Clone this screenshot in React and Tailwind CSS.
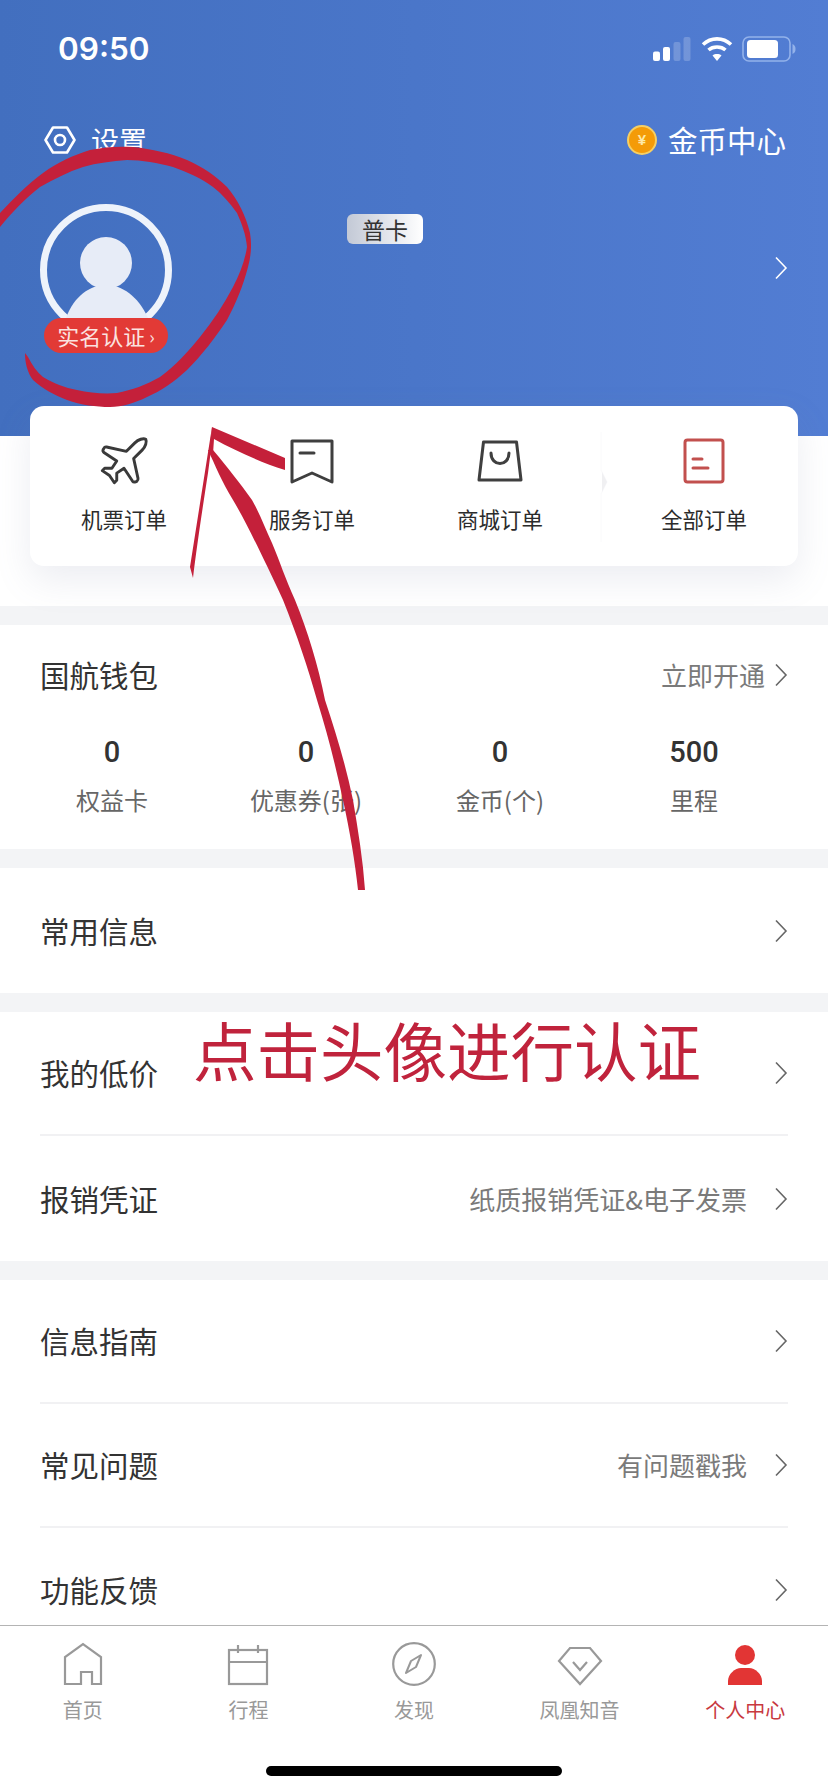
import React from "react";
import { Plane } from "lucide-react";

const cjk = "font-['Noto_Sans_CJK_SC','Noto_Sans',sans-serif]";

const Chevron = ({ className = "stroke-[#666]" }) => (
  <svg width="14" height="24" viewBox="0 0 14 24" fill="none" className={className}>
    <polyline points="2,1.5 12,12 2,22.5" strokeWidth="1.6" />
  </svg>
);

const StatusBar = () => (
  <div className="flex h-[98px] items-center justify-between pl-[58px] pr-[32px]">
    <span className="font-['Inter',sans-serif] text-[31.5px] font-semibold text-white">09:50</span>
    <div className="flex items-center">
      <svg width="38" height="24" viewBox="0 0 38 24" fill="white">
        <rect x="0" y="14.5" width="7" height="9.5" rx="2" />
        <rect x="10" y="10" width="7" height="14" rx="2" />
        <rect x="20.5" y="5" width="7" height="19" rx="2" opacity="0.2" />
        <rect x="30.5" y="0" width="7" height="24" rx="2" opacity="0.2" />
      </svg>
      <svg width="32" height="26" viewBox="0 0 32 26" fill="none" stroke="white" strokeWidth="3.6" className="ml-[10px]">
        <path d="M2 8.5 C10 1 22 1 30 8.5" />
        <path d="M7.5 14 C12 10 20 10 24.5 14" />
        <path d="M16 25 L11.5 19.5 C14 17.6 18 17.6 20.5 19.5 Z" fill="white" stroke="none" />
      </svg>
      <svg width="54" height="26" viewBox="0 0 54 26" fill="none" className="ml-[9px]">
        <rect x="1" y="1" width="47" height="24" rx="6" stroke="#93b2ea" strokeWidth="1.6" />
        <rect x="5" y="4" width="31" height="18" rx="3.5" fill="white" />
        <path d="M50.5 8 C53 9 53.5 11 53.5 13 C53.5 15 53 17 50.5 18 Z" fill="#93b2ea" />
      </svg>
    </div>
  </div>
);

const Header = () => (
  <div className="h-[436px] bg-linear-to-r from-[#426fbf] to-[#527dd3]">
    <StatusBar />
    <div className="flex h-[84px] items-center justify-between pl-[44px] pr-[42px]">
      <div className="flex items-center">
        <svg width="32" height="28" viewBox="0 0 32 28" fill="none" stroke="white" strokeWidth="2.6">
          <path d="M9 1.5 H23 L30.5 14 L23 26.5 H9 L1.5 14 Z" strokeLinejoin="round" />
          <circle cx="16" cy="14" r="5" />
        </svg>
        <span className={`${cjk} ml-[15px] text-[28px] leading-none text-white`}>设置</span>
      </div>
      <div className="flex items-center">
        <div className="flex h-[30px] w-[30px] items-center justify-center rounded-full border-2 border-[#f6cf63] bg-[#f49b07] font-['Liberation_Sans',sans-serif] text-[15px] font-bold text-[#fde9a8]">
          ¥
        </div>
        <span className={`${cjk} ml-[11px] text-[29.5px] leading-none text-white`}>金币中心</span>
      </div>
    </div>
    <div className="flex h-[182px] items-start justify-between pl-[40px] pr-[40px] pt-[22px]">
      <div className="relative h-[132px] w-[132px]">
        <svg width="132" height="132" viewBox="0 0 132 132" fill="none">
          <circle cx="66" cy="66" r="62.5" stroke="#eef3fb" strokeWidth="7" />
          <circle cx="66" cy="59" r="26" fill="#e7ecf7" />
          <path d="M26 114 C34 92 50 81 66 81 C82 81 98 92 108 114 Z" fill="#e7ecf7" />
        </svg>
        <div className={`${cjk} absolute left-[4px] top-[114px] flex h-[35px] w-[124px] items-center justify-center rounded-full bg-[#e23a36] text-[22px] text-[#fbe3e0]`}>
          实名认证<span className="ml-[4px] text-[18px] leading-none">›</span>
        </div>
      </div>
      <div className={`${cjk} ml-[175px] mt-[10px] flex h-[30px] w-[76px] items-center justify-center rounded-md bg-linear-to-r from-[#c3c9d6] to-white text-[23px] leading-none text-[#333]`}>
        普卡
      </div>
      <div className="ml-auto mt-[52px]">
        <Chevron className="stroke-white" />
      </div>
    </div>
  </div>
);

const orderItems = [
  { label: "机票订单", icon: <Plane size={58} strokeWidth={1.2} color="#3a3a3a" /> },
  {
    label: "服务订单",
    icon: (
      <svg width="46" height="46" viewBox="0 0 46 46" fill="none" stroke="#3f3f3f" strokeWidth="3" strokeLinejoin="round">
        <path d="M3 3 H43 V44 L23 35 L3 44 Z" />
        <path d="M11 15 H25" strokeLinecap="round" />
      </svg>
    ),
  },
  {
    label: "商城订单",
    icon: (
      <svg width="46" height="42" viewBox="0 0 46 42" fill="none" stroke="#3f3f3f" strokeWidth="3" strokeLinejoin="round" strokeLinecap="round">
        <path d="M6.5 2 H39.5 L44 40 H2 Z" />
        <path d="M14 13 C14 27 32 27 32 13" />
      </svg>
    ),
  },
  {
    label: "全部订单",
    icon: (
      <svg width="42" height="46" viewBox="0 0 42 46" fill="none" stroke="#c2504e" strokeWidth="3" strokeLinejoin="round" strokeLinecap="round">
        <rect x="2" y="2" width="38" height="42" rx="2.5" />
        <path d="M10 21 H19" />
        <path d="M10 30 H25" />
      </svg>
    ),
  },
];

const OrderCard = () => (
  <div className="relative z-10 mx-[30px] -mt-[30px] flex h-[160px] rounded-[14px] bg-white shadow-[0_14px_36px_rgba(120,130,160,0.14)]">
    {orderItems.map((item, i) => (
      <div
        key={item.label}
        className={`relative flex flex-col items-center ${i === 3 ? "flex-1 pl-[16px]" : "w-[188px]"}`}
      >
        <div className="flex h-[64px] mt-[23px] items-center justify-center">{item.icon}</div>
        <span className={`${cjk} mt-[15px] text-[21.5px] leading-none text-[#2b2b2b]`}>{item.label}</span>
        {i === 3 && (
          <svg width="10" height="110" viewBox="0 0 10 110" fill="none" className="absolute left-[6px] top-[26px]">
            <path d="M1 0 V38 L7 50 L1 62 V110" stroke="#fafafb" strokeWidth="1" />
            <path d="M2 40 L7 50 L2 60 Z" fill="#f0f0f2" />
          </svg>
        )}
      </div>
    ))}
  </div>
);

const Row = ({ title, sub, divider, height = "h-[124px]" }) => (
  <div className={`ml-[40px] mr-[40px] flex ${height} items-center justify-between ${divider ? "border-b-2 border-[#f1f1f3]" : ""}`}>
    <span className={`${cjk} text-[29.5px] leading-none text-[#333]`}>{title}</span>
    <div className="flex items-center">
      {sub && <span className={`${cjk} mr-[27px] text-[26px] leading-none text-[#7a7a7a]`}>{sub}</span>}
      <Chevron />
    </div>
  </div>
);

const stats = [
  { value: "0", label: "权益卡" },
  { value: "0", label: "优惠券(张)" },
  { value: "0", label: "金币(个)" },
  { value: "500", label: "里程" },
];

const Wallet = () => (
  <section className="h-[224px] bg-white">
    <div className="ml-[40px] mr-[40px] flex h-[100px] items-center justify-between">
      <span className={`${cjk} text-[29.5px] leading-none text-[#333]`}>国航钱包</span>
      <div className="flex items-center">
        <span className={`${cjk} mr-[9px] text-[26px] leading-none text-[#7a7a7a]`}>立即开通</span>
        <Chevron />
      </div>
    </div>
    <div className="grid grid-cols-4 pl-[15px] pr-[37px]">
      {stats.map((s) => (
        <div key={s.label} className="flex flex-col items-center">
          <span className="mt-[11px] font-['Roboto',sans-serif] text-[29px] font-medium leading-[32px] text-[#333]">{s.value}</span>
          <span className={`${cjk} mt-[20px] text-[24px] leading-none text-[#666]`}>{s.label}</span>
        </div>
      ))}
    </div>
  </section>
);

const Band = () => <div className="h-[19px] bg-[#f3f4f6]" />;

const tabs = [
  {
    label: "首页",
    icon: (
      <svg width="40" height="44" viewBox="0 0 40 44" fill="none" stroke="#999" strokeWidth="2.2">
        <path d="M2 42 V15 L20 2 L38 15 V42 H29 V30 H18 V42 Z" />
      </svg>
    ),
  },
  {
    label: "行程",
    icon: (
      <svg width="42" height="42" viewBox="0 0 42 42" fill="none" stroke="#999" strokeWidth="2.2">
        <rect x="2" y="6" width="38" height="34" />
        <path d="M2 18 H40 M11 1 V9 M31 1 V9" />
      </svg>
    ),
  },
  {
    label: "发现",
    icon: (
      <svg width="44" height="44" viewBox="0 0 44 44" fill="none" stroke="#999" strokeWidth="2.2" strokeLinejoin="round">
        <circle cx="22" cy="22" r="20.8" />
        <path d="M14 31 L19 19 L29 13 L24 25 Z" strokeWidth="2" />
      </svg>
    ),
  },
  {
    label: "凤凰知音",
    icon: (
      <svg width="46" height="40" viewBox="0 0 46 40" fill="none" stroke="#999" strokeWidth="2.2">
        <path d="M13 2 H33 L44 15 L23 38 L2 15 Z" />
        <path d="M16 16 L23 24 L30 16" />
      </svg>
    ),
  },
  {
    label: "个人中心",
    active: true,
    icon: (
      <svg width="36" height="42" viewBox="0 0 36 42" fill="#e23534">
        <circle cx="18" cy="11" r="10" />
        <path d="M1 41 V37 C1 30 8 24 14 24 H22 C28 24 35 30 35 37 V41 Z" />
      </svg>
    ),
  },
];

const TabBar = () => (
  <nav className="h-[167px] border-t border-[#b4b4b4] bg-white">
    <div className="grid h-[110px] grid-cols-5">
      {tabs.map((t) => (
        <div key={t.label} className="flex flex-col items-center">
          <div className="flex h-[44px] mt-[16px] items-end justify-center">{t.icon}</div>
          <span className={`${cjk} mt-[14px] text-[20px] leading-none ${t.active ? "text-[#c8393f]" : "text-[#999]"}`}>
            {t.label}
          </span>
        </div>
      ))}
    </div>
    <div className="mx-auto mt-[30px] h-[10px] w-[296px] rounded-full bg-black" />
  </nav>
);

// hand-drawn red marks someone put over the screenshot
const Annotation = () => (
  <svg width="828" height="1792" viewBox="0 0 828 1792" fill="#c4203a" className="pointer-events-none absolute left-0 top-0 z-20">
    <path d="M0 213 C14 198 28 184 43 173 C58 162 74 155 90 150 C104 147 118 146 133 147 C152 149 170 153 187 160 C203 167 216 176 227 187 C238 200 246 216 250 233 C252 245 251 256 248 267 C243 286 236 303 227 320 C215 338 202 355 187 370 C174 382 161 391 147 397 C135 403 122 407 110 407 C96 407 81 405 67 400 C54 395 43 389 33 380 C27 372 25 362 25 353 L28 357 C32 365 37 372 43 377 C53 383 65 388 77 390 C90 393 104 394 117 393 C132 390 146 385 160 377 C175 366 188 352 200 337 C213 321 224 304 233 287 C240 274 245 260 247 247 C246 235 242 224 237 213 C230 203 222 194 213 187 C201 178 187 172 173 167 C158 163 142 160 127 160 C112 161 97 163 83 167 C68 172 54 179 40 187 C26 198 12 212 0 227 Z" />
    <path d="M212 427 L285 458 L285 470 C260 462 236 451 214 439 L213 454 L209 454 Z" />
    <path d="M212 427 L190 567 L193 578 C197 545 203 505 208 473 L211 450 Z" />
    <path d="M208 450 C215 465 222 482 233 500 C245 520 262 555 283 600 C297 635 308 668 317 700 C328 735 336 768 343 800 C350 832 355 862 358 890 L365 890 C363 860 358 830 353 800 C346 766 336 733 325 700 C318 665 308 632 295 600 C285 578 280 562 272 543 C265 528 260 514 252 500 C240 483 228 468 213 450 Z" />
  </svg>
);

export default function App() {
  return (
    <div className="relative h-[1792px] w-[828px] overflow-hidden bg-white">
      <div className="flex h-full flex-col">
        <div className="flex-1 overflow-hidden">
          <Header />
          <OrderCard />
          <div className="h-[40px]" />
          <Band />
          <Wallet />
          <Band />
          <section className="bg-white">
            <Row title="常用信息" height="h-[125px]" />
          </section>
          <Band />
          <section className="bg-white">
            <Row title="我的低价" divider />
            <Row title="报销凭证" sub="纸质报销凭证&电子发票" height="h-[125px]" />
          </section>
          <Band />
          <section className="bg-white">
            <Row title="信息指南" divider />
            <Row title="常见问题" sub="有问题戳我" divider />
            <Row title="功能反馈" />
          </section>
        </div>
        <TabBar />
      </div>
      <Annotation />
      <div className={`${cjk} absolute left-[193px] top-[1004px] z-20 text-[63.5px] leading-[88px] text-[#c0233c]`}>
        点击头像进行认证
      </div>
    </div>
  );
}
